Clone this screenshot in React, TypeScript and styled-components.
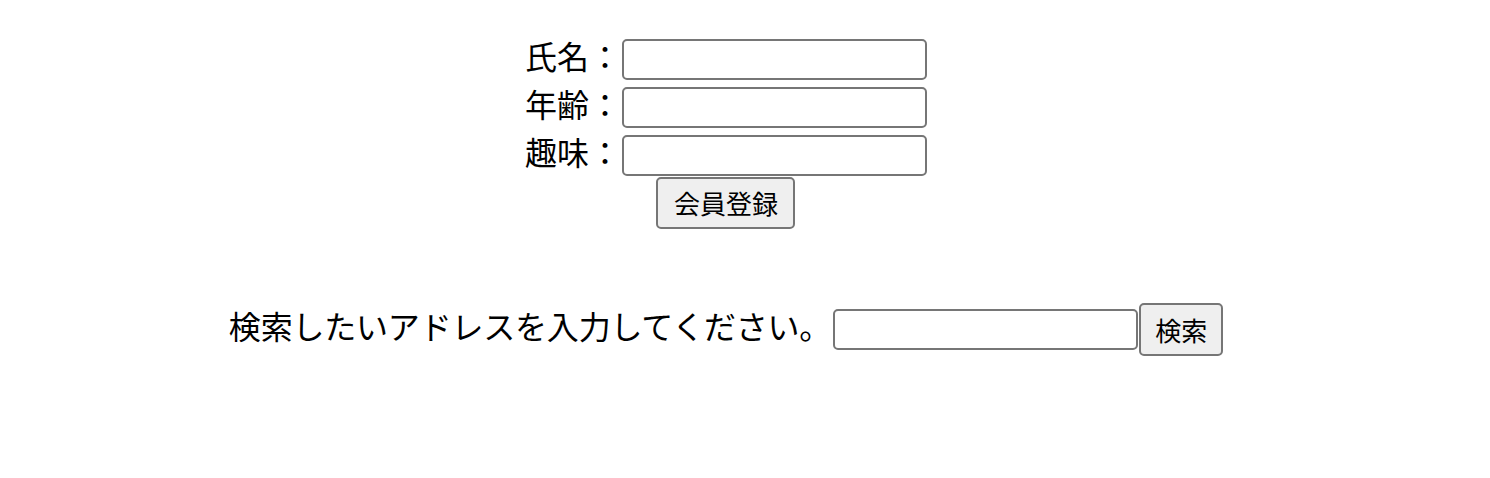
import React from "react";
import styled, { createGlobalStyle } from "styled-components";

const GlobalStyle = createGlobalStyle`
  body {
    margin: 0;
    background: #ffffff;
    color: #000000;
    font-family: "Noto Sans CJK JP", "Noto Sans", sans-serif;
  }
`;

const Page = styled.div`
  width: 1452px;
  padding-top: 39px;
  display: flex;
  flex-direction: column;
  align-items: center;
`;

const Form = styled.form`
  display: flex;
  flex-direction: column;
  align-items: center;
  gap: 7px;
`;

const Row = styled.div`
  display: flex;
  align-items: center;
  height: 41px;
`;

const Label = styled.label`
  font-size: 32px;
  line-height: 42px;
  margin-top: -9px;
  margin-right: 1px;
  white-space: nowrap;
`;

const TextInput = styled.input`
  box-sizing: border-box;
  width: 305px;
  height: 41px;
  margin: 0;
  padding: 2px 4px;
  border: 2px solid #767676;
  border-radius: 5px;
  background: #ffffff;
  font-size: 26px;
  font-family: inherit;
`;

const Button = styled.button<{ $w: number; $h: number }>`
  box-sizing: border-box;
  width: ${({ $w }) => $w}px;
  height: ${({ $h }) => $h}px;
  margin: 0;
  padding: 0;
  border: 2px solid #767676;
  border-radius: 5px;
  background: #efefef;
  color: #000000;
  font-family: inherit;
  font-size: 26px;
  line-height: 1;
`;

const SubmitRow = styled.div`
  margin-top: -6px;
  display: flex;
  justify-content: center;
`;

const SearchRow = styled.div`
  margin-top: 74px;
  display: flex;
  align-items: center;
  gap: 1px;
`;

const SearchText = styled.span`
  font-size: 32px;
  letter-spacing: -0.2px;
  margin-top: -10px;
  margin-right: 1px;
  white-space: nowrap;
`;

export default function App() {
  return (
    <>
      <GlobalStyle />
      <Page>
        <Form onSubmit={(e) => e.preventDefault()}>
          <Row>
            <Label>氏名：</Label>
            <TextInput type="text" />
          </Row>
          <Row>
            <Label>年齢：</Label>
            <TextInput type="text" />
          </Row>
          <Row>
            <Label>趣味：</Label>
            <TextInput type="text" />
          </Row>
          <SubmitRow>
            <Button $w={139} $h={52} type="submit">
              会員登録
            </Button>
          </SubmitRow>
        </Form>
        <SearchRow>
          <SearchText>検索したいアドレスを入力してください。</SearchText>
          <TextInput type="text" />
          <Button $w={84} $h={53} type="button">
            検索
          </Button>
        </SearchRow>
      </Page>
    </>
  );
}
